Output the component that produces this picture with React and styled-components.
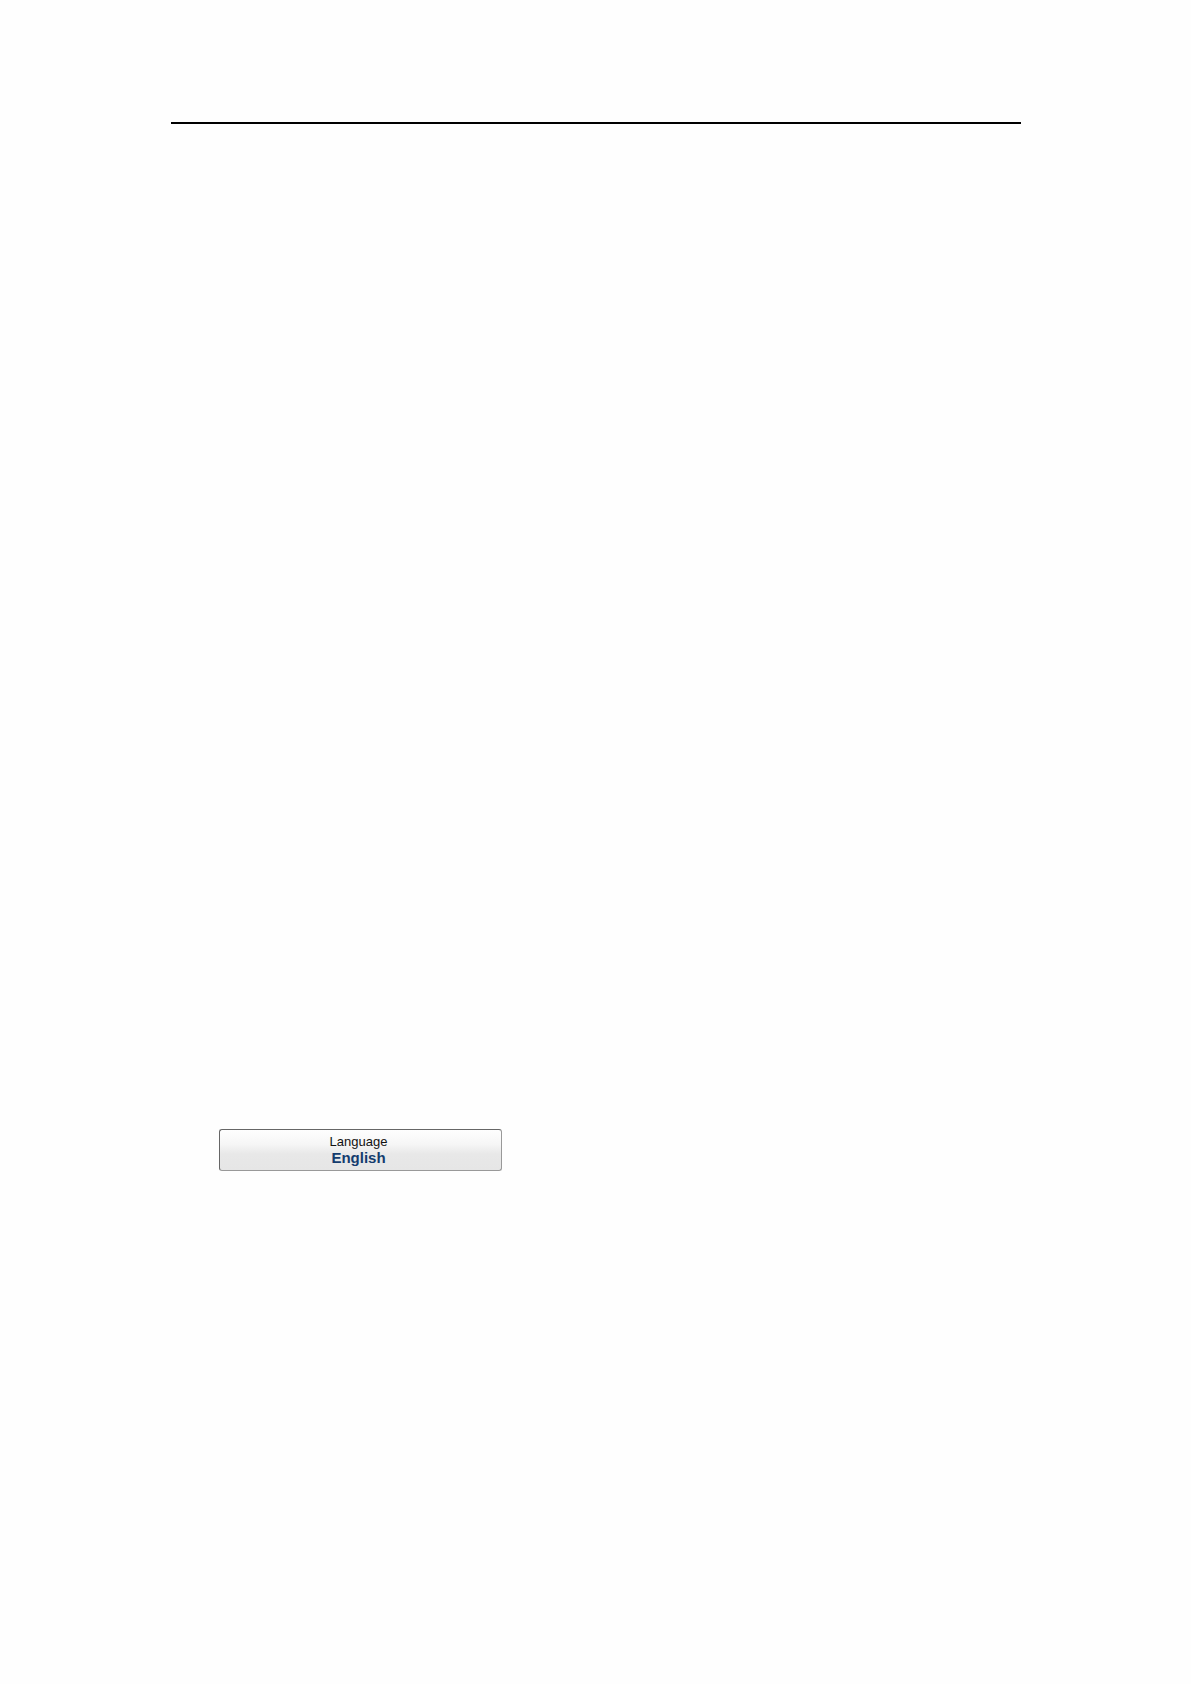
import React, { useState } from "react";
import styled, { createGlobalStyle } from "styled-components";

const GlobalStyle = createGlobalStyle`
  body {
    margin: 0;
    background: #fefefe;
  }
`;

const Page = styled.div`
  box-sizing: border-box;
  min-height: 100vh;
  padding: 122px 170px 0 171px;
  font-family: "Liberation Sans", Arial, sans-serif;
`;

const Rule = styled.hr`
  height: 2px;
  margin: 0;
  border: 0;
  background: #000;
`;

const Content = styled.main`
  padding: 1005px 48px 48px;
`;

const LanguageButton = styled.button`
  display: flex;
  flex-direction: column;
  align-items: center;
  box-sizing: border-box;
  width: 283px;
  height: 42px;
  padding: 4px 4px 4px 0;
  border: 1px solid;
  border-color: #666 #999 #999 #666;
  border-radius: 3px;
  background: linear-gradient(#fefefe, #f6f6f6 35%, #e8e8e8 60%, #e6e6e6);
  font-family: inherit;
  line-height: 16px;
  cursor: pointer;
`;

const Label = styled.span`
  font-size: 13px;
  color: #111;
`;

const Value = styled.span`
  font-size: 15px;
  font-weight: bold;
  color: #143c6e;
`;

const languages = ["English", "Norsk"];

const App = () => {
  const [index, setIndex] = useState(0);

  const handleClick = () => {
    setIndex((index + 1) % languages.length);
  };

  return (
    <Page>
      <GlobalStyle />
      <Rule />
      <Content>
        <LanguageButton type="button" onClick={handleClick}>
          <Label>Language</Label>
          <Value>{languages[index]}</Value>
        </LanguageButton>
      </Content>
    </Page>
  );
};

export default App;
